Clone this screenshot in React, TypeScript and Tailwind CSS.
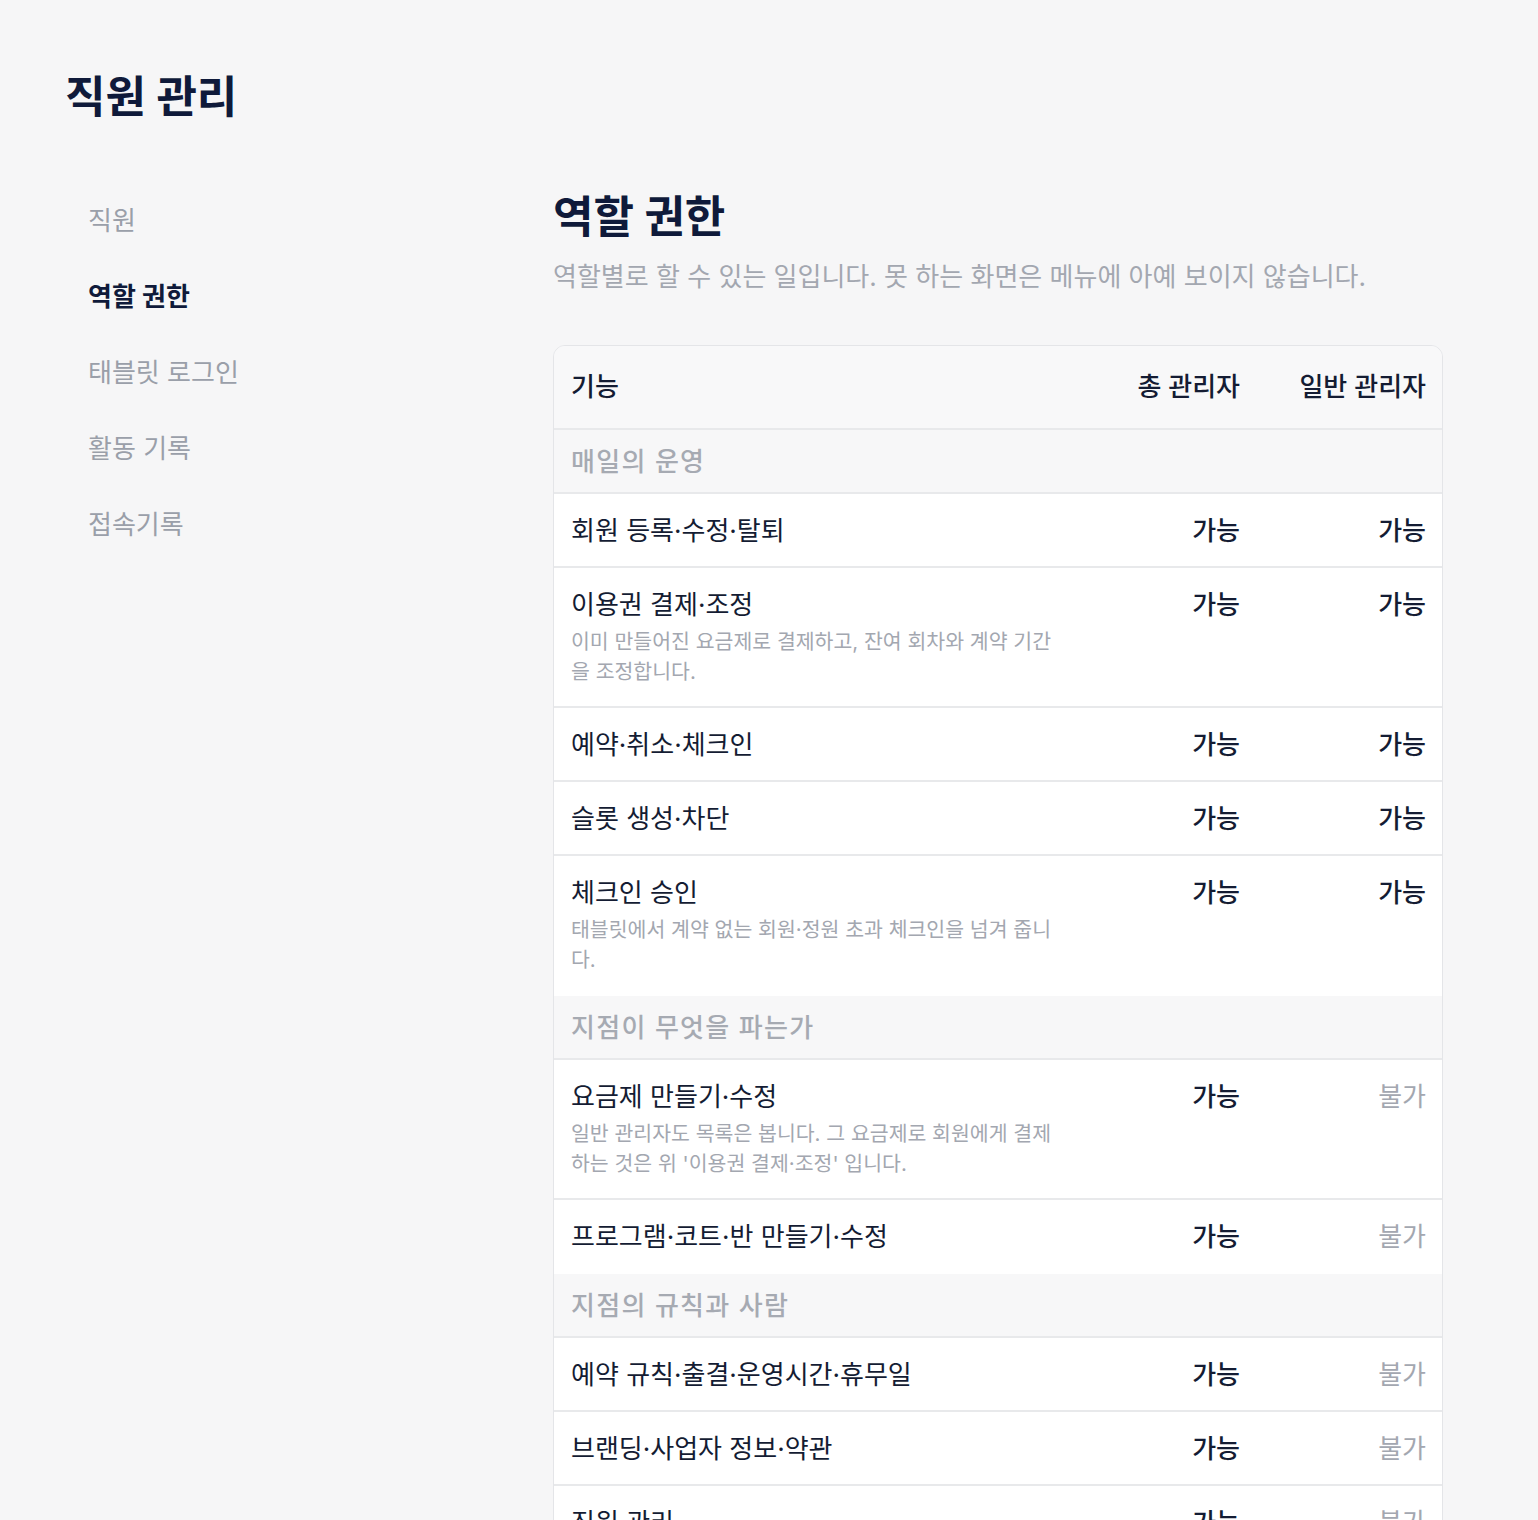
import React from 'react';

type Access = '가능' | '불가';

type Row = {
    label: string;
    desc?: string;
    owner: Access;
    manager: Access;
};

type Section = {
    title: string;
    rows: Row[];
};

const MENU = ['직원', '역할 권한', '태블릿 로그인', '활동 기록', '접속기록'];

const SECTIONS: Section[] = [
    {
        title: '매일의 운영',
        rows: [
            { label: '회원 등록·수정·탈퇴', owner: '가능', manager: '가능' },
            {
                label: '이용권 결제·조정',
                desc: '이미 만들어진 요금제로 결제하고, 잔여 회차와 계약 기간을 조정합니다.',
                owner: '가능',
                manager: '가능',
            },
            { label: '예약·취소·체크인', owner: '가능', manager: '가능' },
            { label: '슬롯 생성·차단', owner: '가능', manager: '가능' },
            {
                label: '체크인 승인',
                desc: '태블릿에서 계약 없는 회원·정원 초과 체크인을 넘겨 줍니다.',
                owner: '가능',
                manager: '가능',
            },
        ],
    },
    {
        title: '지점이 무엇을 파는가',
        rows: [
            {
                label: '요금제 만들기·수정',
                desc: "일반 관리자도 목록은 봅니다. 그 요금제로 회원에게 결제하는 것은 위 '이용권 결제·조정' 입니다.",
                owner: '가능',
                manager: '불가',
            },
            { label: '프로그램·코트·반 만들기·수정', owner: '가능', manager: '불가' },
        ],
    },
    {
        title: '지점의 규칙과 사람',
        rows: [
            { label: '예약 규칙·출결·운영시간·휴무일', owner: '가능', manager: '불가' },
            { label: '브랜딩·사업자 정보·약관', owner: '가능', manager: '불가' },
            { label: '직원 관리', owner: '가능', manager: '불가' },
        ],
    },
];

function AccessCell({ value }: { value: Access }) {
    return (
        <div
            className={`px-[16px] text-right text-[26px] leading-[36px] ${
                value === '가능' ? 'font-medium text-[#141c33]' : 'text-[#a3a7b0]'
            }`}
        >
            {value}
        </div>
    );
}

export default function App() {
    return (
        <div className="min-h-screen bg-[#f6f6f7] font-['Inter','Noto_Sans_CJK_KR',sans-serif] text-[#141c33]">
            <div className="pl-[65px] pt-[70px]">
                <h1 className="text-[44px] font-bold leading-[54px] text-[#0f1a3a]">직원 관리</h1>

                <div className="mt-[66px] flex">
                    {/* Side menu */}
                    <nav className="flex w-[488px] shrink-0 flex-col gap-[40px] pt-[13px] pl-[23px]">
                        {MENU.map((item) => (
                            <div
                                key={item}
                                className={`text-[26px] leading-[36px] ${
                                    item === '역할 권한' ? 'font-bold text-[#0f1a3a]' : 'text-[#9a9fa9]'
                                }`}
                            >
                                {item}
                            </div>
                        ))}
                    </nav>

                    <main className="w-[890px] shrink-0">
                        <h2 className="text-[44px] font-bold leading-[54px] text-[#0f1a3a]">역할 권한</h2>
                        <p className="mt-[15px] text-[26px] leading-[36px] text-[#a3a7b0]">
                            역할별로 할 수 있는 일입니다. 못 하는 화면은 메뉴에 아예 보이지 않습니다.
                        </p>

                        <div className="mt-[50px] overflow-hidden rounded-[12px] border border-[#e4e5e8]">
                            {/* Header */}
                            <div className="grid grid-cols-[1fr_186px_186px] items-center border-b-2 border-[#e8e9eb] bg-[#f8f8f9] py-[23px] text-[26px] font-medium leading-[36px]">
                                <div className="px-[17px]">기능</div>
                                <div className="px-[16px] text-right">총 관리자</div>
                                <div className="px-[16px] text-right">일반 관리자</div>
                            </div>

                            {SECTIONS.map((section) => (
                                <div key={section.title}>
                                    <div className="border-b-2 border-[#e8e9eb] bg-[#f7f7f8] px-[17px] pt-[14px] pb-[12px] text-[26px] font-medium leading-[36px] tracking-[0.05em] text-[#a6aab2]">
                                        {section.title}
                                    </div>
                                    {section.rows.map((row, i) => (
                                        <div
                                            key={row.label}
                                            className={`grid grid-cols-[1fr_186px_186px] border-b-2 bg-white pt-[19px] pb-[17px] ${
                                                i < section.rows.length - 1 ? 'border-[#e8e9eb]' : 'border-white'
                                            }`}
                                        >
                                            <div className="px-[17px]">
                                                <div className="text-[26px] leading-[36px]">{row.label}</div>
                                                {row.desc && (
                                                    <p className="mt-[4px] mb-[2px] text-[20.5px] leading-[30px] text-[#a3a7b0]">
                                                        {row.desc}
                                                    </p>
                                                )}
                                            </div>
                                            <AccessCell value={row.owner} />
                                            <AccessCell value={row.manager} />
                                        </div>
                                    ))}
                                </div>
                            ))}
                        </div>
                    </main>
                </div>
            </div>
        </div>
    );
}
